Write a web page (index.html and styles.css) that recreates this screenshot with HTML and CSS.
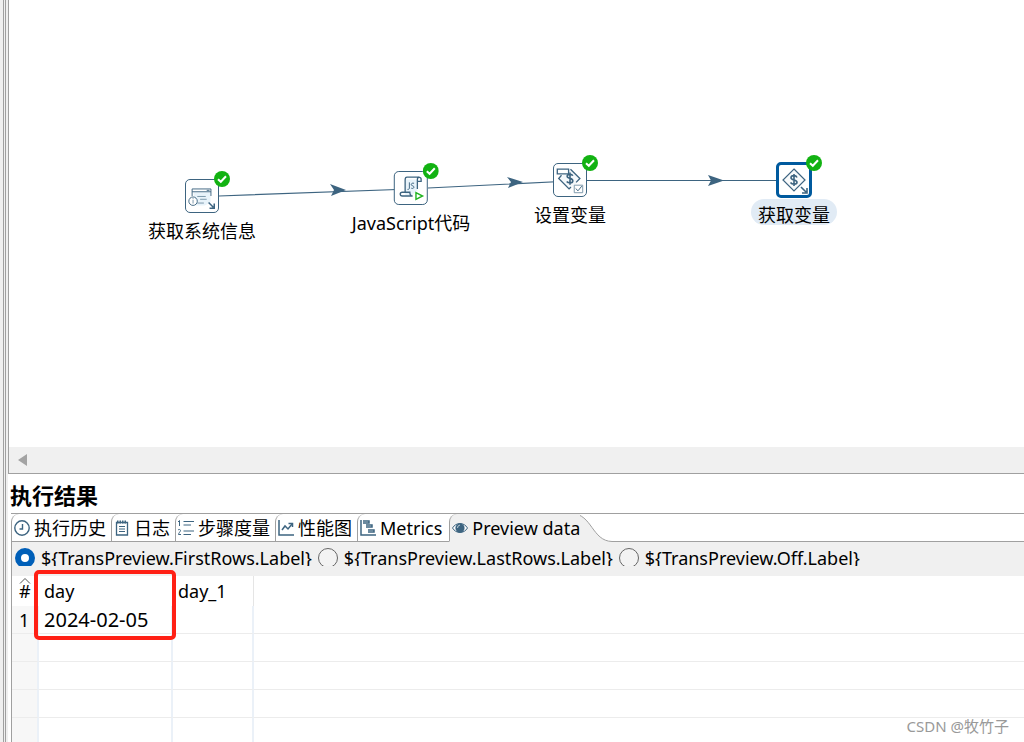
FILE: index.html
```html
<!DOCTYPE html>
<html lang="zh-CN">
<head>
<meta charset="utf-8">
<title>执行结果</title>
<link rel="stylesheet" href="styles.css">
</head>
<body>
<svg class="defs" aria-hidden="true">
  <symbol id="ok" viewBox="0 0 16 16"><circle cx="8" cy="8" r="8" fill="#12b212"/><path d="M4 8.2l2.8 2.6L12 5.2" fill="none" stroke="#fff" stroke-width="2"/></symbol>
  <symbol id="out" viewBox="0 0 8 8"><path d="M1 1l5 5M7 2v5H2" fill="none" stroke="#3d6480" stroke-width="1.6"/></symbol>
</svg>
<div class="sash"></div>
<main class="main">
  <section class="editor">
    <div class="canvas">
      <svg class="hops" aria-hidden="true">
        <g stroke="#3d6480" stroke-width="1.2"><path d="M210 196L402 189M419 188L562 181M578 180.500H776"/></g>
        <g fill="#3d6480"><path d="M321 184l16 6-15 6 3-6zM498 177l16 5-15 6 3-6zM699 175l16 5.500-16 5.500 3-5.500z"/></g>
      </svg>
      <div class="node node-info">
        <div class="box">
          <svg class="glyph" viewBox="0 0 34 34" fill="none" stroke="#3d6480">
            <path d="M8 13h18v11l-6 3H10z" fill="#e8f3fa" stroke="none"/>
            <path d="M6.500 17V9.500h20V17M6.500 12.500h20M22 11h3"/><path d="M12 17.500h9M15 20.500h7M12 24.500h7" stroke="#7894a8"/>
            <circle cx="7.500" cy="22.500" r="4.500" fill="#fff"/><path d="M7.500 21v4M7.500 19v1" stroke="#7894a8"/>
            <use href="#out" x="23" y="23" width="8" height="8"/>
          </svg>
          <svg class="badge"><use href="#ok"/></svg>
        </div>
        <span class="label">获取系统信息</span>
      </div>
      <div class="node node-js">
        <div class="box">
          <svg class="glyph" viewBox="0 0 34 34" fill="none" stroke="#3d6480">
            <path d="M12 8h12v12l-6 5h-7z" fill="#e8f3fa" stroke="none"/>
            <path d="M24 18V8c0-3 4-3 4 0v2h-4M26 5.500H13c-2 0-2 1-2 3V22M19 25.500H8c-3 0-3-4 0-4h8c0 2 1 4 3 4" stroke-width="1.400"/>
            <path d="M15.500 11v6c0 1.500-1 1.500-2 1.500M20.500 12c-3-1-4 2-2 2.500 3 .5 2 4-1 2.700" stroke-width="1"/>
            <path d="M22.500 22l7 3.500-7 3.500z" stroke="#20b420" stroke-width="1.500" fill="#fff"/>
          </svg>
          <svg class="badge"><use href="#ok"/></svg>
        </div>
        <span class="label">JavaScript代码</span>
      </div>
      <div class="node node-set">
        <div class="box">
          <svg class="glyph" viewBox="0 0 34 34" fill="none" stroke="#3d6480">
            <path d="M17 5l11 11-11 11L6 16z" fill="#f4f8fb" stroke="none"/>
            <path d="M17.500 5.500l10 10-4 4M8 12l-3 3.500 11 11 2-2" stroke-width="1.400"/>
            <path d="M20 12.500c-1-2-6-2-6 .5 0 3 6 1.500 6 5 0 2.500-5 2.500-6.500.5M17 9v13" stroke-width="1.700"/>
            <path d="M3.500 5.500h12v5h-12z" fill="#fff" stroke-width="1.400"/>
            <path d="M21.500 22.500h9v8h-9z" fill="#fff" stroke="#7894a8"/><path d="M23 26l2.500 2.500 4-5"/>
          </svg>
          <svg class="badge"><use href="#ok"/></svg>
        </div>
        <span class="label">设置变量</span>
      </div>
      <div class="node node-get">
        <div class="box box-selected">
          <svg class="glyph" viewBox="0 0 34 34" fill="none" stroke="#3d6480">
            <path d="M17 6l11 11-11 11L6 17z" fill="#f8fafb" stroke-width="1.200"/>
            <path d="M20 14.500c-1-2.500-6-2.500-6 .2 0 3 6 1.500 6 4.500 0 2.600-5 2.600-6.500.3M17 11v12" stroke-width="1.600"/>
            <use href="#out" x="23" y="23" width="8" height="8"/>
          </svg>
          <svg class="badge"><use href="#ok"/></svg>
        </div>
        <span class="label label-selected">获取变量</span>
      </div>
    </div>
    <div class="scroll"><button class="scroll-left" aria-label="向左滚动"><svg width="9" height="12" viewBox="0 0 9 12"><path d="M9 0v12L0 6z" fill="#a3a3a3"/></svg></button></div>
  </section>
  <section class="results">
    <h1 class="title">执行结果</h1>
    <div class="tabs" role="tablist">
      <button class="tab" role="tab"><svg class="icon" viewBox="0 0 16 16" fill="none" stroke="#3d6480"><circle cx="8" cy="8" r="7.200" stroke-width="1.400"/><path d="M8.500 4v5H5.500" stroke-width="1.400"/></svg>执行历史</button>
      <button class="tab" role="tab"><svg class="icon" viewBox="0 0 16 16" fill="none" stroke="#3d6480"><path d="M2.500 2.500h11v12.500h-11z" stroke-width="1.300"/><path d="M3 2h10" stroke-width="3" stroke-dasharray="1.500 1"/><path d="M5 6.500h6M5 9h6M5 11.500h6"/></svg>日志</button>
      <button class="tab" role="tab"><svg class="icon" viewBox="0 0 16 16" fill="none" stroke="#3d6480"><path d="M0 2l1.500-1.500V6M0 10c1-1 2.500-.5 2.500.5S.5 13 .5 14.500H3M5.500 1.500H16M5.500 5H13M5.500 11H16M5.500 14.500H13"/></svg>步骤度量</button>
      <button class="tab" role="tab"><svg class="icon" viewBox="0 0 16 16" fill="none" stroke="#3d6480" stroke-width="1.500"><path d="M1 0v15h15"/><path d="M4 10l3-4 3 3 4-5"/><path d="M10.500 3.500H14.500V7"/></svg>性能图</button>
      <button class="tab tab-metrics" role="tab"><svg class="icon" viewBox="0 0 16 16" fill="none" stroke="#3d6480" stroke-width="1.500"><path d="M1 0v15h15M3 1h6v2H3M6 5h6v2H6M8 10h6v2H8"/></svg>Metrics</button>
      <button class="tab tab-active" role="tab" aria-selected="true"><svg class="icon" viewBox="0 0 16 16"><path d="M.5 8C4 2 12 2 15.500 8 12 14 4 14 .5 8z" fill="#fff" stroke="#3d6480"/><circle cx="8" cy="8" r="4.600" fill="#3d6480"/><path d="M8 5a3 3 0 0 0-2.500 3" stroke="#b9cbd8" fill="none"/></svg>Preview data</button>
      <svg class="curve" viewBox="0 0 40 29"><path d="M0 0C20 1 20 28 40 28.500V29H0z" fill="#f0f0f0"/><path d="M0 .5C20 1 20 28 40 28.500" fill="none" stroke="#a0a0a0"/></svg>
      <div class="tab-rest"></div>
    </div>
    <div class="pane">
      <div class="options">
        <label class="option"><input type="radio" name="rows" checked>${TransPreview.FirstRows.Label}</label>
        <label class="option"><input type="radio" name="rows">${TransPreview.LastRows.Label}</label>
        <label class="option"><input type="radio" name="rows">${TransPreview.Off.Label}</label>
      </div>
      <div class="grid-wrap">
        <table class="grid">
          <colgroup><col class="c-num"><col class="c-day"><col class="c-day1"><col></colgroup>
          <thead><tr><th class="num"><svg class="sort" viewBox="0 0 12 6"><path d="M1 5.500l5-5 5 5" fill="none" stroke="#555"/></svg>#</th><th>day</th><th class="last">day_1</th><th></th></tr></thead>
          <tbody>
            <tr><td class="num">1</td><td class="value">2024-02-05</td><td></td><td></td></tr>
            <tr><td></td><td></td><td></td><td></td></tr>
            <tr><td></td><td></td><td></td><td></td></tr>
            <tr><td></td><td></td><td></td><td></td></tr>
            <tr><td></td><td></td><td></td><td></td></tr>
          </tbody>
        </table>
        <div class="highlight"></div>
      </div>
    </div>
    <div class="watermark">CSDN @牧竹子</div>
  </section>
</main>
</body>
</html>
```
FILE: styles.css
```css
* { box-sizing: border-box; }
body {
  margin: 0;
  height: 100vh;
  display: flex;
  overflow: hidden;
  background: #fff;
  color: #000;
  font: 18px/24px "Noto Sans", "Noto Sans CJK SC", sans-serif;
}
button { font: inherit; color: inherit; border: 0; padding: 0; background: none; }
.defs { position: absolute; width: 0; height: 0; }
.sash {
  flex: none;
  width: 8px;
  background: linear-gradient(90deg, #f0f0f0 3px, #a0a0a0 3px 4px, #f0f0f0 4px 5px, #a0a0a0 5px 6px, #f0f0f0 6px);
}
.main { flex: 1; min-width: 0; display: flex; flex-direction: column; }
.editor {
  flex: 1;
  min-height: 0;
  display: flex;
  flex-direction: column;
  border-left: 1px solid #a0a0a0;
  border-bottom: 1px solid #a0a0a0;
}
.canvas { flex: 1; position: relative; overflow: hidden; }
.hops { position: absolute; inset: 0; width: 100%; height: 100%; }
.node {
  position: absolute;
  display: flex;
  flex-direction: column;
  align-items: center;
  transform: translateX(-50%);
}
.node-info { left: 193px; top: 179px; }
.node-js { left: 402px; top: 171px; }
.node-set { left: 561px; top: 163px; }
.node-get { left: 785px; top: 162px; }
.box { position: relative; width: 34px; height: 34px; border: 1px solid #3d6480; border-radius: 5px; background: #fff; }
.box-selected { width: 36px; height: 36px; border: 3px solid #005a9e; }
.glyph { display: block; width: 100%; height: 100%; }
.box-selected .glyph { width: 34px; height: 34px; margin: -2px; }
.badge { position: absolute; right: -12px; top: -9px; width: 16px; height: 16px; }
.box-selected .badge { right: -13px; top: -10px; }
.label { margin-top: 6px; white-space: nowrap; }
.label-selected { margin-top: 1px; padding: 4px 7px 0; height: 26px; border-radius: 13px; background: #e1ebf5; }
.scroll { height: 26px; background: #f0f0f0; display: flex; align-items: center; padding-left: 9px; }
.scroll-left { display: flex; }

.results { flex: none; position: relative; padding-left: 2px; }
.title { margin: 0; padding-top: 6px; height: 39px; font-size: 22px; line-height: 30px; font-weight: 700; }
.tabs { display: flex; height: 29px; margin-left: 1px; border-top: 1px solid #a0a0a0; white-space: nowrap; }
.tab {
  display: flex;
  align-items: center;
  gap: 4px;
  padding: 0 5px 0 2px;
  border-left: 1px solid #a0a0a0;
  border-bottom: 1px solid #a0a0a0;
  border-top-left-radius: 8px;
}
.tab-metrics { padding-right: 7px; }
.tab-active { background: #f0f0f0; border-bottom-color: #f0f0f0; padding-right: 0; }
.icon { flex: none; width: 16px; height: 16px; }
.curve { flex: none; width: 40px; height: 29px; margin: -1px 0 0 -8px; }
.tab-active, .curve { position: relative; }
.curve { z-index: -1; }
.tab-rest { flex: 1; border-bottom: 1px solid #a0a0a0; }

.pane { margin-left: 1px; border-left: 1px solid #a0a0a0; }
.options { display: flex; gap: 6px; height: 34px; padding: 6px 3px 10px; background: #f0f0f0; }
.option { display: flex; align-items: flex-start; gap: 6px; height: 18px; line-height: 20px; overflow: hidden; white-space: nowrap; }
.option input {
  appearance: none;
  flex: none;
  width: 20px;
  height: 20px;
  margin: 0;
  border: 1px solid #666;
  border-radius: 50%;
  background: #f3f3f3;
}
.option input:checked { border: 6px solid #005fb8; background: #fff; }

.grid-wrap { position: relative; }
.grid { width: 100%; table-layout: fixed; border-collapse: separate; border-spacing: 0; }
.c-num { width: 27px; }
.c-day { width: 134px; }
.c-day1 { width: 81px; }
.grid th, .grid td { padding: 0 0 0 5px; text-align: left; font-weight: 400; white-space: nowrap; }
.grid th { height: 30px; position: relative; }
.grid th.last { border-right: 1px solid #e5e5e5; }
.grid td { height: 28px; border-bottom: 1px solid #ececec; border-right: 2px solid #ebf1f8; }
.grid td:last-child { border-right: 0; }
.grid td:first-child { background: #f7f7f7; }
.grid .num { padding-left: 7px; }
.grid .value { font-size: 20px; }
.grid tbody tr:last-child td { height: 24px; border-bottom: 0; }
.sort { position: absolute; left: 7px; top: 2px; width: 12px; height: 6px; }
.highlight { position: absolute; left: 22px; top: -6px; width: 142px; height: 70px; border: 4px solid #ff2015; border-radius: 5px; }
.watermark { position: absolute; right: 15px; bottom: 4px; font-size: 15px; color: #999; }
```
